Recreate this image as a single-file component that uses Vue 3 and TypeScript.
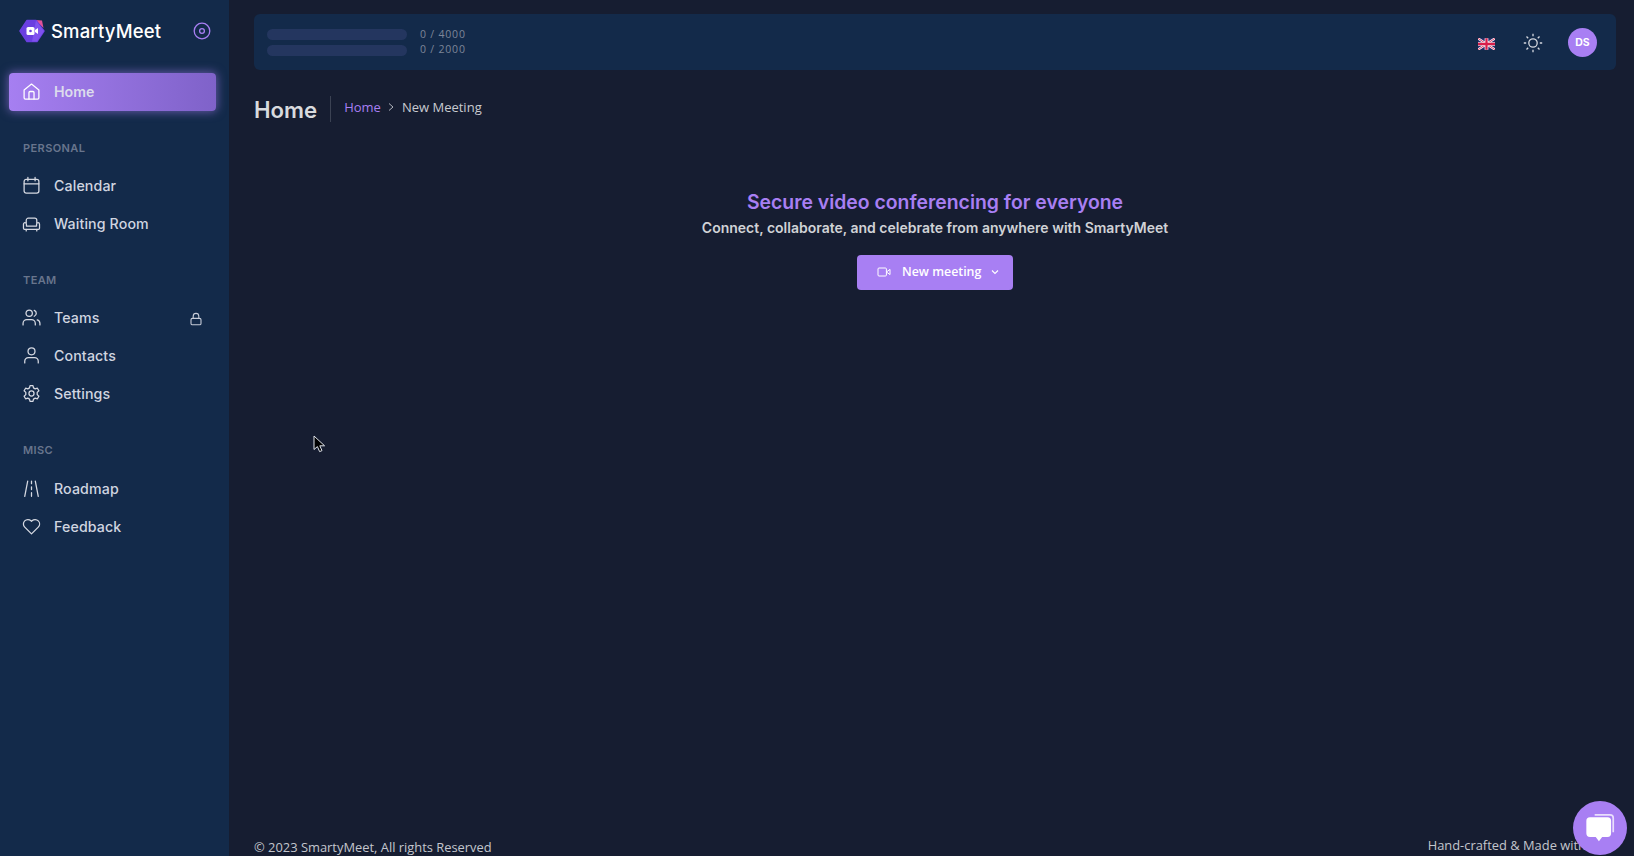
<script setup lang="ts">
interface NavItem { label: string; icon: string; locked?: boolean }
interface NavGroup { title: string; items: NavItem[] }
const groups: NavGroup[] = [
  { title: 'PERSONAL', items: [{ label: 'Calendar', icon: 'calendar' }, { label: 'Waiting Room', icon: 'sofa' }] },
  { title: 'TEAM', items: [{ label: 'Teams', icon: 'users', locked: true }, { label: 'Contacts', icon: 'user' }, { label: 'Settings', icon: 'gear' }] },
  { title: 'MISC', items: [{ label: 'Roadmap', icon: 'road' }, { label: 'Feedback', icon: 'heart' }] },
]
const usage = ['0 / 4000', '0 / 2000']
</script>

<template>
  <div class="app">
    <aside class="sidebar">
      <div class="brand">
        <svg class="logo" viewBox="0 0 26 24" width="26" height="24">
          <path d="M16 1 L23 1.5 L24.5 9 Z" fill="#e0529c" />
          <path d="M8 1.5 H17 L25 12 L18 22.5 H8 L1 12 Z" fill="#6a3fe0" stroke="#6a3fe0" stroke-width="1.5" stroke-linejoin="round" />
          <path d="M17 1.5 L25 12 L18 22.5 H13 Z" fill="#7f52ee" />
          <rect x="7.5" y="8" width="8" height="8" rx="1.6" fill="#fff" />
          <path d="M16 11 L19 9 V15 L16 13 Z" fill="#fff" />
          <circle cx="11.5" cy="12" r="1.3" fill="#6a3fe0" />
        </svg>
        <span class="brand-name">SmartyMeet</span>
        <svg class="toggle" viewBox="0 0 18 18" width="18" height="18">
          <circle cx="9" cy="9" r="7.8" fill="none" stroke="#a87ff3" stroke-width="1.3" />
          <circle cx="9" cy="9" r="2.4" fill="none" stroke="#a87ff3" stroke-width="1.3" />
        </svg>
      </div>

      <a class="nav-item active">
        <svg class="icon" viewBox="0 0 18 18">
          <path d="M2 7.6 L9 2 L16 7.6 V15 a1.2 1.2 0 0 1 -1.2 1.2 H3.2 A1.2 1.2 0 0 1 2 15 Z" />
          <path d="M6.6 16 V10 a1 1 0 0 1 1 -1 H10.4 a1 1 0 0 1 1 1 V16" />
        </svg>
        <span>Home</span>
      </a>

      <section v-for="group in groups" :key="group.title" class="group">
        <h3 class="group-title">{{ group.title }}</h3>
        <a v-for="item in group.items" :key="item.label" class="nav-item">
          <svg class="icon" viewBox="0 0 18 18">
            <template v-if="item.icon === 'calendar'">
              <rect x="2" y="3.2" width="14" height="13" rx="2" />
              <path d="M2 7.4 H16 M5.6 1.4 V4.6 M12.4 1.4 V4.6" />
            </template>
            <template v-else-if="item.icon === 'sofa'">
              <path d="M4 8 V6 a2 2 0 0 1 2 -2 H12 a2 2 0 0 1 2 2 V8" />
              <path d="M1.4 9.6 a1.4 1.4 0 0 1 2.8 0 V11.4 H13.8 V9.6 a1.4 1.4 0 0 1 2.8 0 V13.6 a1 1 0 0 1 -1 1 H2.4 a1 1 0 0 1 -1 -1 Z" />
              <path d="M4 14.6 V16 M14 14.6 V16" />
            </template>
            <template v-else-if="item.icon === 'users'">
              <circle cx="6.8" cy="5" r="3" />
              <path d="M1 16 V14.6 a3.6 3.6 0 0 1 3.6 -3.6 H9 a3.6 3.6 0 0 1 3.6 3.6 V16" />
              <path d="M11.6 2.2 a3 3 0 0 1 0 5.6 M14.4 11.2 a3.6 3.6 0 0 1 2.6 3.4 V16" />
            </template>
            <template v-else-if="item.icon === 'user'">
              <circle cx="9" cy="5" r="3.3" />
              <path d="M2.6 16 V14.4 a3.4 3.4 0 0 1 3.4 -3.4 H12 a3.4 3.4 0 0 1 3.4 3.4 V16" />
            </template>
            <template v-else-if="item.icon === 'gear'">
              <circle cx="9" cy="9" r="2.4" />
              <path d="M7.6 1.6 H10.4 L10.9 3.7 L12.5 4.6 L14.6 4 L16 6.4 L14.4 7.9 V10.1 L16 11.6 L14.6 14 L12.5 13.4 L10.9 14.3 L10.4 16.4 H7.6 L7.1 14.3 L5.5 13.4 L3.4 14 L2 11.6 L3.6 10.1 V7.9 L2 6.4 L3.4 4 L5.5 4.6 L7.1 3.7 Z" />
            </template>
            <template v-else-if="item.icon === 'road'">
              <path d="M5.4 2 L2.6 16.4 M12.6 2 L15.4 16.4 M9 2 V4.4 M9 7.4 V10 M9 13 V16.4" />
            </template>
            <template v-else>
              <path d="M9 16 L2.6 9.6 A4.2 4.2 0 0 1 8.5 3.6 L9 4.1 L9.5 3.6 A4.2 4.2 0 0 1 15.4 9.6 Z" />
            </template>
          </svg>
          <span>{{ item.label }}</span>
          <svg v-if="item.locked" class="lock" viewBox="0 0 14 14" width="14" height="14">
            <rect x="2" y="6.4" width="10" height="6.4" rx="1.4" />
            <path d="M4.2 6.4 V4.2 a2.8 2.8 0 0 1 5.6 0 V6.4" />
          </svg>
        </a>
      </section>
    </aside>

    <main class="main">
      <header class="topbar">
        <div class="usage">
          <div v-for="text in usage" :key="text" class="usage-row">
            <div class="usage-bar"></div>
            <span class="usage-text">{{ text }}</span>
          </div>
        </div>
        <div class="actions">
          <svg class="flag" viewBox="0 0 60 40" width="17" height="12">
            <rect width="60" height="40" fill="#2b2d6e" />
            <path d="M0 0 L60 40 M60 0 L0 40" stroke="#fff" stroke-width="8" />
            <path d="M0 0 L60 40 M60 0 L0 40" stroke="#d81e4a" stroke-width="3" />
            <path d="M30 0 V40 M0 20 H60" stroke="#fff" stroke-width="13" />
            <path d="M30 0 V40 M0 20 H60" stroke="#d81e4a" stroke-width="8" />
          </svg>
          <svg class="sun" viewBox="0 0 20 20" width="20" height="20">
            <circle cx="10" cy="10" r="4.2" />
            <path d="M10 .8 V3.2 M10 16.8 V19.2 M.8 10 H3.2 M16.8 10 H19.2 M3.5 3.5 L5.2 5.2 M14.8 14.8 L16.5 16.5 M3.5 16.5 L5.2 14.8 M14.8 5.2 L16.5 3.5" />
          </svg>
          <div class="avatar">DS</div>
        </div>
      </header>

      <div class="crumbs">
        <h1 class="page-title">Home</h1>
        <span class="crumb-link">Home</span>
        <svg class="crumb-sep" viewBox="0 0 10 10" width="10" height="10"><path d="M3 1.5 L7 5 L3 8.5" /></svg>
        <span class="crumb-current">New Meeting</span>
      </div>

      <section class="hero">
        <h2 class="hero-title">Secure video conferencing for everyone</h2>
        <p class="hero-sub">Connect, collaborate, and celebrate from anywhere with SmartyMeet</p>
        <button class="cta" type="button">
          <svg class="cta-cam" viewBox="0 0 14 12" width="14" height="12">
            <rect x="1" y="2" width="8.4" height="8" rx="1" />
            <path d="M9.4 6 L13 3.4 V8.6 Z" />
          </svg>
          <span>New meeting</span>
          <svg class="cta-caret" viewBox="0 0 10 10" width="10" height="10"><path d="M2 3.5 L5 6.5 L8 3.5" /></svg>
        </button>
      </section>

      <footer class="footer">
        <span>© 2023 SmartyMeet, All rights Reserved</span>
        <span class="footer-right">Hand-crafted &amp; Made with</span>
      </footer>
    </main>

    <div class="chat">
      <svg viewBox="0 0 30 30" width="32" height="32">
        <path d="M10 2.6 H24.4 a3 3 0 0 1 3 3 V19" fill="none" stroke="#fff" stroke-width="1.6" opacity=".75" />
        <path d="M5.6 5 H22 a3.4 3.4 0 0 1 3.4 3.4 V20 a3.4 3.4 0 0 1 -3.4 3.4 H17 L14 27.4 L11 23.4 H5.6 A3.4 3.4 0 0 1 2.2 20 V8.4 A3.4 3.4 0 0 1 5.6 5 Z" fill="#fff" />
      </svg>
    </div>

    <svg class="cursor" viewBox="0 0 14 20" width="14" height="20">
      <path d="M1 1 V14.5 L4.4 11.6 L6.6 16.6 L9 15.6 L6.8 10.8 L11.6 10.8 Z" fill="#000" stroke="#dfe3ea" stroke-width="1" />
    </svg>
  </div>
</template>

<style>
html, body { margin: 0; background: #161d31; }
</style>

<style scoped>
.app {
  display: flex;
  height: 100vh;
  overflow: hidden;
  position: relative;
  background: #161d31;
  font-family: "Open Sans", sans-serif;
  color: #d0d2d6;
}
.sidebar {
  width: 229px;
  flex: none;
  background: #132a4a;
  display: flex;
  flex-direction: column;
  font-family: Inter, sans-serif;
}
.brand {
  display: flex;
  align-items: center;
  height: 62px;
  margin-bottom: 11px;
  padding: 0 18px 0 19px;
}
.logo { flex: none; margin-right: 6px; }
.brand-name { font-size: 18.5px; font-weight: 500; color: #fff; flex: 1; letter-spacing: .15px; }
.toggle { flex: none; }
.nav-item {
  display: flex;
  align-items: center;
  height: 38px;
  box-sizing: border-box;
  margin: 0 13px 0 9px;
  padding: 0 13px 2px 12.5px;
  font-size: 14.2px;
  font-weight: 500;
  letter-spacing: .12px;
  color: #d0d5e0;
}
.nav-item .icon {
  width: 19px;
  height: 19px;
  flex: none;
  margin-right: 13.5px;
  fill: none;
  stroke: #d6d9e2;
  stroke-width: 1.2;
  stroke-linecap: round;
  stroke-linejoin: round;
}
.nav-item .lock {
  margin-left: auto;
  margin-top: 3px;
  fill: none;
  stroke: #c8cdd9;
  stroke-width: 1.1;
}
.nav-item.active {
  background: linear-gradient(90deg, #a67ff1, #7f62c9);
  border-radius: 4px;
  box-shadow: 0 0 10px 1px rgba(168, 127, 243, .55);
  color: #dcdcec;
  font-weight: 600;
  letter-spacing: 0;
}
.nav-item.active .icon { stroke: #fff; }
.group { margin-top: 28px; }
.group:last-child .group-title { margin-bottom: 11px; }
.group-title {
  margin: 0 0 10px 23px;
  height: 18px;
  line-height: 18px;
  font-size: 11px;
  font-weight: 600;
  letter-spacing: .4px;
  color: #68758d;
}
.main {
  flex: 1;
  min-width: 0;
  display: flex;
  flex-direction: column;
  padding: 14px 18px 0 25px;
}
.topbar {
  display: flex;
  align-items: center;
  justify-content: space-between;
  height: 56px;
  flex: none;
  padding: 0 19px 0 13px;
  background: #132a4a;
  border-radius: 6px;
}
.usage { display: flex; flex-direction: column; gap: 5px; }
.usage-row { display: flex; align-items: center; gap: 13px; }
.usage-bar { width: 140px; height: 11px; border-radius: 6px; background: #24365f; }
.usage-text { font-size: 10.5px; line-height: 11px; letter-spacing: .8px; color: #7d8699; }
.usage-row:last-child .usage-text { margin-top: -1px; margin-bottom: 1px; }
.actions { display: flex; align-items: center; }
.flag { margin-right: 28px; margin-top: 3px; }
.sun { margin-right: 25px; margin-top: 1px; fill: none; stroke: #d5d8df; stroke-width: 1.3; }
.avatar {
  width: 29px;
  height: 29px;
  border-radius: 50%;
  background: #a87ff3;
  color: #fff;
  display: flex;
  align-items: center;
  justify-content: center;
  font-family: Inter, sans-serif;
  font-size: 10.5px;
  font-weight: 700;
}
.crumbs { display: flex; align-items: center; margin-top: 26px; height: 26px; }
.page-title {
  margin: 0;
  height: 26px;
  padding-right: 13px;
  margin-right: 13px;
  border-right: 1px solid #3b4253;
  font-family: Inter, sans-serif;
  font-size: 22.2px;
  line-height: 28px;
  font-weight: 600;
  color: #d8dade;
}
.crumb-link, .crumb-current, .crumb-sep { margin-bottom: 4px; }
.crumb-link { font-size: 13px; color: #a87ff3; }
.crumb-sep { margin-left: 5.5px; margin-right: 5.5px; fill: none; stroke: #b0b4bd; stroke-width: 1; }
.crumb-current { font-size: 13px; color: #c8cad0; }
.hero {
  display: flex;
  flex-direction: column;
  align-items: center;
  margin-top: 66px;
}
.hero-title {
  margin: 0;
  font-family: Inter, sans-serif;
  font-size: 19.4px;
  line-height: 28px;
  font-weight: 600;
  color: #a87ff3;
}
.hero-sub {
  margin: 2px 0 0;
  font-family: Inter, sans-serif;
  font-size: 14px;
  line-height: 20px;
  font-weight: 600;
  color: #d0d2d6;
}
.cta {
  margin-top: 17px;
  display: flex;
  align-items: center;
  width: 156px;
  height: 35px;
  padding: 0 0 2px 20px;
  border: 0;
  border-radius: 4px;
  background: #a87ff3;
  color: #fff;
  font-family: "Open Sans", sans-serif;
  font-size: 12.4px;
  font-weight: 600;
}
.cta-cam { margin-right: 11px; fill: none; stroke: #fff; stroke-width: 1; }
.cta-caret { margin-left: 9px; fill: none; stroke: #fff; stroke-width: 1.1; }
.footer {
  margin-top: auto;
  display: flex;
  justify-content: space-between;
  align-items: flex-end;
  height: 24px;
  font-size: 12.9px;
  line-height: 18px;
  color: #c3c6cd;
}
.footer-right { padding-right: 30px; margin-bottom: 2px; }
.chat {
  position: absolute;
  left: 1573px;
  top: 801px;
  width: 54px;
  height: 54px;
  border-radius: 50%;
  background: #a87ff3;
  display: flex;
  align-items: center;
  justify-content: center;
}
.cursor { position: absolute; left: 313px; top: 435px; }
</style>
